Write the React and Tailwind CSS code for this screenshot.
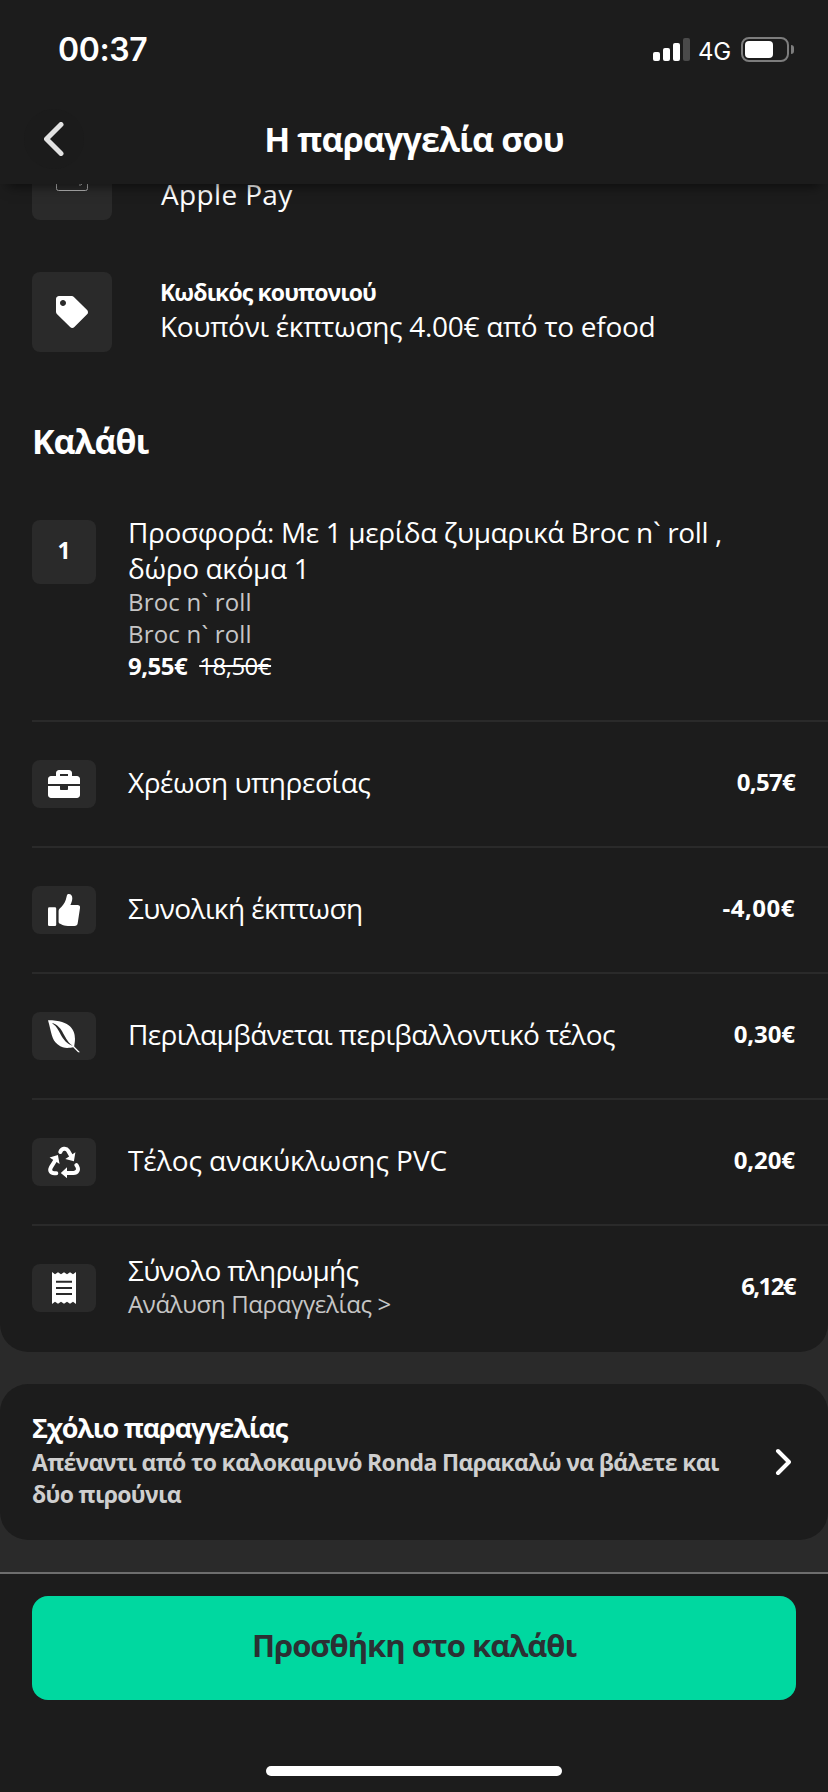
import React from 'react';
import { FaBriefcase, FaEnvira, FaTag } from 'react-icons/fa';

const ThumbIcon = () => (
    <svg viewBox="0 0 32 32" className="w-8 h-8" fill="currentColor">
        <rect y="13.3" width="8.2" height="18.7" rx="1.3" />
        <path d="M10.6 17c0-.9.3-1.6.9-2.2 3-2.800 5.200-5.500 6.300-9 .5-1.600.7-3 1.100-4.300C19.200.4 20 0 20.800 0c2.300 0 3.500 1.800 3.500 4.200 0 2.600-1 4.600-1.900 6.800h7.300c1.700 0 2.600 1.300 2.300 2.900l-2.300 15.300c-.3 1.700-1.300 2.800-3.200 2.800h-6.700c-2.700 0-4.800-.8-6.700-1.700-1.300-.6-2.500-1-2.500-2.300z" />
    </svg>
);

const RecycleIcon = () => (
    <svg viewBox="0 0 32 32" className="w-8 h-8" fill="currentColor">
        <g fill="none" stroke="currentColor" strokeWidth="4" strokeLinecap="round" strokeLinejoin="round">
            <path d="M12.300 6c1.300-3.700 5.700-4.600 7.800-1.200l2.900 5" />
            <path d="m7.500 14-4.600 7.400c-1.700 3 0 5.800 3.400 5.800h2" />
            <path d="M19 26.900h6.500c3.900 0 5.600-3.500 3.600-6.700l-.7-1" />
        </g>
        <path d="m27.400 6.300-1.500 8.900-8.600-2.300zM1.600 11.600l8.300-2.500 1.700 8.800zM12.800 26.900l6.200-5.700v11z" />
    </svg>
);

const ReceiptIcon = () => (
    <svg viewBox="0 0 24 32" className="w-6 h-8" fill="currentColor">
        <path d="m0 0 3 2.300 3-2 3 2 3-2 3 2 3-2 3 2L24 0v32l-3-2.300-3 2-3-2-3 2-3-2-3 2-3-2L0 32z" />
        <path d="M4 9.800h16M4 15.900h16M4 22h16" stroke="#2a2a2a" strokeWidth="2" />
    </svg>
);

const charges = [
    { label: "Χρέωση υπηρεσίας", amount: "0,57€", icon: <FaBriefcase className="w-8 h-8" />, tracking: "tracking-[-0.45px]", amountTracking: "tracking-[-0.7px]" },
    { label: "Συνολική έκπτωση", amount: "-4,00€", icon: <ThumbIcon />, tracking: "tracking-[-0.6px]", amountTracking: "tracking-[0.5px]" },
    { label: "Περιλαμβάνεται περιβαλλοντικό τέλος", amount: "0,30€", icon: <FaEnvira className="w-8 h-[36.57px] shrink-0" />, tracking: "tracking-[-0.6px]", amountTracking: "tracking-[-0.1px]" },
    { label: "Τέλος ανακύκλωσης PVC", amount: "0,20€", icon: <RecycleIcon />, tracking: "tracking-[-0.05px]", amountTracking: "tracking-[-0.1px]" },
    { label: "Σύνολο πληρωμής", sub: "Ανάλυση Παραγγελίας >", amount: "6,12€", icon: <ReceiptIcon />, tracking: "tracking-[-0.7px]", amountTracking: "tracking-[-1.6px]" }
];

const StatusBar = () => (
    <div className="flex items-start justify-between h-[92px] pl-[58px] pr-[34px] pt-[37px] font-['Inter',sans-serif]">
        <span className="text-[32px] leading-[26px] font-semibold tracking-[-0.4px]">00:37</span>
        <div className="flex items-center h-[25px]">
            <div className="flex items-end gap-[3px] h-[23px]">
                <span className="w-[7px] h-[9px] rounded-[2px] bg-white" />
                <span className="w-[7px] h-[13px] rounded-[2px] bg-white" />
                <span className="w-[7px] h-[18px] rounded-[2px] bg-white" />
                <span className="w-[7px] h-[23px] rounded-[2px] bg-[#4a4a4a]" />
            </div>
            <span className="ml-2 w-[34px] pt-[3px] text-[24px] leading-[25px] font-normal tracking-[-0.3px]">4G</span>
            <div className="ml-[9px] w-12 h-[25px] p-0.5 rounded-[8px] border-2 border-[#7d7d7d]">
                <div className="w-7 h-[17px] rounded-[4px] bg-white" />
            </div>
            <span className="ml-0.5 w-[3px] h-[9px] rounded-r-full bg-[#7d7d7d]" />
        </div>
    </div>
);

const Header = () => (
    <header className="relative z-10 h-[184px] bg-[#1c1c1c] shadow-[0_10px_12px_-8px_rgba(0,0,0,0.6)]">
        <StatusBar />
        <div className="grid grid-cols-[64px_1fr_64px] items-start px-6">
            <button className="flex items-center justify-center w-[60px] h-[60px] mt-[17px] rounded-full bg-[#1b1b1b]">
                <svg viewBox="0 0 20 34" className="w-5 h-[34px] stroke-[#e2e2e2]" fill="none" strokeWidth="5" strokeLinecap="round" strokeLinejoin="round">
                    <path d="M17 2.5 2.5 17 17 31.5" />
                </svg>
            </button>
            <h1 className="mt-[23px] text-center text-[34px] leading-[48px] font-bold tracking-[-0.85px]">
                Η παραγγελία σου
            </h1>
        </div>
    </header>
);

const App = () => {
    return (
        <div className="flex flex-col w-[828px] h-[1792px] bg-[#2a2a2a] text-white font-['Open_Sans','Noto_Sans',sans-serif] overflow-hidden">
            <Header />

            <main className="h-[1168px] bg-[#1c1c1c] rounded-b-[28px]">
                {/* Payment method, scrolled half under the header */}
                <div className="flex h-9">
                    <div className="flex justify-center ml-8 w-20 h-9 rounded-b-[8px] bg-[#2a2a2a]">
                        <svg viewBox="0 0 32 8" className="w-8 h-2" fill="none" stroke="#b5b5b5">
                            <path d="M.5 0v4.500a2 2 0 0 0 2 2h27a2 2 0 0 0 2-2V0" />
                            <path d="M23 1h2l1-1" />
                        </svg>
                    </div>
                    <p className="-mt-2 ml-[49px] text-[28px] leading-9 tracking-[0.35px]">Apple Pay</p>
                </div>

                {/* Coupon */}
                <div className="flex mt-[52px] pl-8">
                    <div className="flex items-center justify-center w-20 h-20 rounded-[8px] bg-[#2a2a2a]">
                        <FaTag className="w-8 h-8" />
                    </div>
                    <div className="mt-1 ml-12">
                        <p className="text-[23px] leading-8 font-bold tracking-[-0.9px]">Κωδικός κουπονιού</p>
                        <p className="text-[28px] leading-9 tracking-[-0.3px]">Κουπόνι έκπτωσης 4.00€ από το efood</p>
                    </div>
                </div>

                <h2 className="mt-[67px] ml-8 text-[34px] leading-[44px] font-bold tracking-[-1px]">Καλάθι</h2>

                {/* Cart item */}
                <div className="flex h-[257px] pt-[57px] pl-8">
                    <div className="flex items-center justify-center w-16 h-16 pb-1 rounded-[8px] bg-[#2a2a2a] text-[23px] font-bold">1</div>
                    <div className="-mt-1.5 ml-8 text-[24px] leading-8">
                        <p className="text-[28px] leading-9 tracking-[-0.37px]">
                            Προσφορά: Με 1 μερίδα ζυμαρικά Broc n` roll ,<br />
                            δώρο ακόμα 1
                        </p>
                        <p className="tracking-[0.2px] text-[#c6c6c6]">Broc n` roll</p>
                        <p className="tracking-[0.2px] text-[#c6c6c6]">Broc n` roll</p>
                        <p className="flex gap-3 tracking-[-0.5px]">
                            <span className="font-bold">9,55€</span>
                            <s>18,50€</s>
                        </p>
                    </div>
                </div>

                {/* Charges */}
                {charges.map((charge) => (
                    <div key={charge.label} className="ml-8 border-t-2 border-[#2a2a2a]">
                        <div className="flex items-center h-[124px] pr-[33px]">
                            <div className="flex items-center justify-center w-16 h-12 rounded-[8px] bg-[#2a2a2a]">
                                {charge.icon}
                            </div>
                            <div className="flex-1 pb-1 ml-8">
                                <p className={`text-[28px] leading-9 ${charge.tracking}`}>{charge.label}</p>
                                {charge.sub && <p className="text-[24px] leading-8 tracking-[-0.35px] text-[#c6c6c6]">{charge.sub}</p>}
                            </div>
                            <span className={`pb-1 text-[24px] leading-8 font-bold ${charge.amountTracking}`}>{charge.amount}</span>
                        </div>
                    </div>
                ))}
            </main>

            {/* Order comment */}
            <section className="flex items-center justify-between h-[156px] mt-8 pl-8 pr-[37px] rounded-[28px] bg-[#1c1c1c]">
                <div className="self-start pt-[26px]">
                    <h3 className="text-[27px] leading-9 font-bold tracking-[-1.15px]">Σχόλιο παραγγελίας</h3>
                    <p className="text-[23px] leading-8 font-bold tracking-[-0.67px] text-[#cfcfcf]">
                        Απέναντι από το καλοκαιρινό Ronda Παρακαλώ να βάλετε και<br />
                        δύο πιρούνια
                    </p>
                </div>
                <svg viewBox="0 0 16 28" className="w-4 h-7" fill="none" stroke="white" strokeWidth="4" strokeLinecap="round" strokeLinejoin="round">
                    <path d="m3 3 11 11L3 25" />
                </svg>
            </section>

            <footer className="flex flex-col items-center flex-1 mt-8 px-8 pt-[22px] border-t-2 border-[#6e6e6e] bg-[#1c1c1c]">
                <button className="w-full h-[104px] pb-1.5 rounded-[16px] bg-[#00d8a0] text-[#2b3033] text-[31px] font-bold tracking-[-1px]">
                    Προσθήκη στο καλάθι
                </button>
                <div className="w-[296px] h-2.5 mt-[66px] rounded-full bg-white" />
            </footer>
        </div>
    );
};

export default App;
